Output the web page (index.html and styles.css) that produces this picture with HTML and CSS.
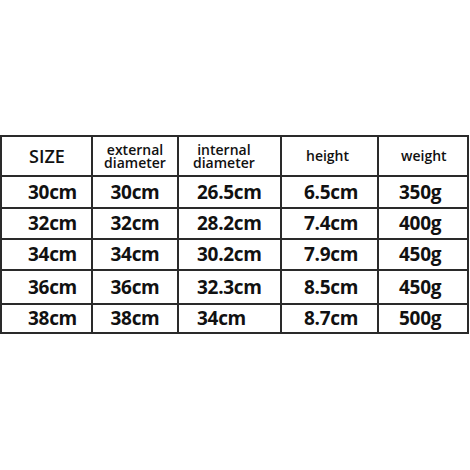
FILE: index.html
```html
<!DOCTYPE html>
<html>
<head>
<meta charset="utf-8">
<link rel="stylesheet" href="styles.css">
</head>
<body>
<div class="page">
  <div class="grid">
    <div class="cell h c1"><span class="size">SIZE</span></div>
    <div class="cell h c2"><div class="two"><div class="ln">external</div><div class="ln">diameter</div></div></div>
    <div class="cell h c3"><div class="two"><div class="ln">internal</div><div class="ln">diameter</div></div></div>
    <div class="cell h c4"><span class="one">height</span></div>
    <div class="cell h c5"><span class="one">weight</span></div>

    <div class="cell c1">30cm</div><div class="cell c2">30cm</div><div class="cell c3">26.5cm</div><div class="cell c4">6.5cm</div><div class="cell c5">350g</div>
    <div class="cell c1">32cm</div><div class="cell c2">32cm</div><div class="cell c3">28.2cm</div><div class="cell c4">7.4cm</div><div class="cell c5">400g</div>
    <div class="cell c1">34cm</div><div class="cell c2">34cm</div><div class="cell c3">30.2cm</div><div class="cell c4">7.9cm</div><div class="cell c5">450g</div>
    <div class="cell c1">36cm</div><div class="cell c2">36cm</div><div class="cell c3">32.3cm</div><div class="cell c4">8.5cm</div><div class="cell c5">450g</div>
    <div class="cell c1">38cm</div><div class="cell c2">38cm</div><div class="cell c3">34cm</div><div class="cell c4">8.7cm</div><div class="cell c5">500g</div>
  </div>
</div>
</body>
</html>
```
FILE: styles.css
```css
html, body {
  margin: 0;
  padding: 0;
  background: #fff;
}
.page {
  width: 470px;
  height: 470px;
  padding-top: 135px;
  box-sizing: border-box;
}
.grid {
  display: grid;
  width: 469px;
  grid-template-columns: 89px 84px 101px 95px 88px;
  grid-template-rows: 38px 30px 29px 29px 32px 27px;
  gap: 2px;
  padding: 2px;
  box-sizing: border-box;
  background: #2a2a2a;
}
.cell {
  background: #fff;
  display: flex;
  align-items: center;
  font-family: "Open Sans", sans-serif;
  font-weight: 700;
  font-size: 19px;
  color: #111;
  letter-spacing: -0.3px;
  line-height: 1;
}
.h {
  font-weight: 600;
  font-size: 14px;
  letter-spacing: 0;
}
.two {
  display: flex;
  flex-direction: column;
  align-items: center;
}
.ln {
  height: 13px;
  line-height: 13px;
}
.size {
  font-size: 18px;
  font-weight: 600;
}
.c1 { padding-left: 26px; }
.c2 { justify-content: center; }
.c3 { padding-left: 18px; }
.c4 { padding-left: 22px; }
.c5 { padding-left: 20px; }
.h.c1 { padding-left: 27px; }
.h.c3 { padding-left: 14px; }
.h.c4 { padding-left: 24px; }
.h.c5 { padding-left: 22px; }
```
